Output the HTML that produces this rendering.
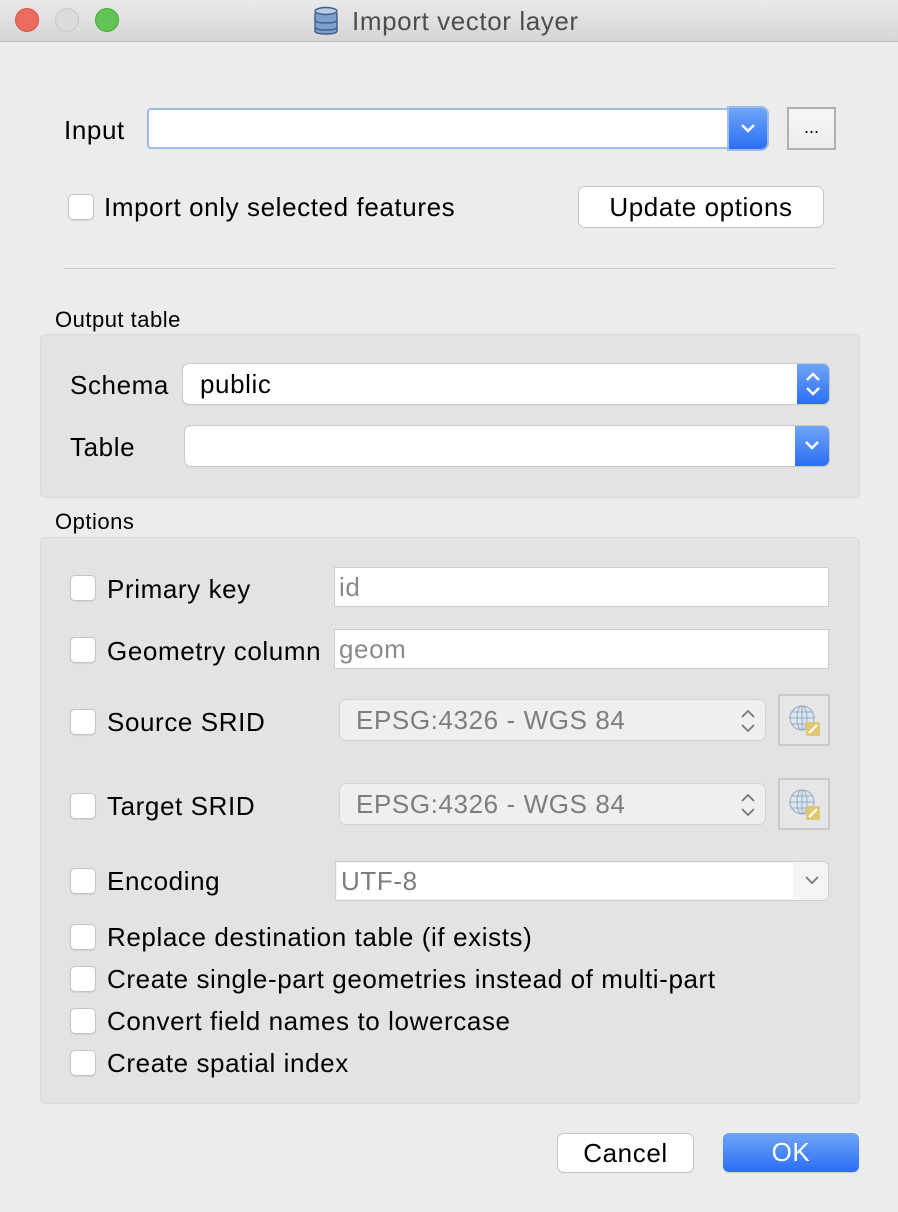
<!DOCTYPE html>
<html><head><meta charset="utf-8"><style>
*{box-sizing:border-box;margin:0;padding:0}
body{width:898px;height:1212px;background:#ececec;font-family:"Liberation Sans",sans-serif;position:relative;overflow:hidden;color:#000}
.a{position:absolute}
.t{position:absolute;font-size:26px;letter-spacing:0.6px;line-height:28px;white-space:nowrap}
.s{position:absolute;font-size:22px;letter-spacing:0.5px;line-height:24px;white-space:nowrap}
.cb{position:absolute;width:26px;height:26px;background:#fff;border:1px solid #c4c4c4;border-radius:5px;box-shadow:0 1px 1px rgba(0,0,0,.08)}
.field{position:absolute;background:#fff;border:1px solid #cdcdcd}
.combo{position:absolute;background:#fff;border-radius:6px;box-shadow:0 0 0 1px #c8c8c8,0 1px 1px rgba(0,0,0,.15)}
.blue{position:absolute;top:0;right:0;bottom:0;background:linear-gradient(#6fa5f7,#2a6ef5);border-radius:0 6px 6px 0}
.btn{position:absolute;background:#fff;border-radius:6px;box-shadow:0 0 0 1px #c6c6c6,0 1px 1px rgba(0,0,0,.15);font-size:26px;letter-spacing:0.6px;text-align:center}
.grp{position:absolute;background:#e3e3e3;border:1px solid #dadada;border-radius:6px}
.dis{position:absolute;background:#efefef;border-radius:6px;box-shadow:0 0 0 1px #d2d2d2,0 1px 1px rgba(0,0,0,.1);color:#7d7d7d;font-size:26px;letter-spacing:0.6px;line-height:40px;padding-left:16px}
.gb{position:absolute;width:52px;height:52px;border:2px solid #c9c9c9;background:#e6e6e6}
</style></head><body>
<div class="a" style="left:0;top:0;width:898px;height:42px;background:linear-gradient(#e9e9e9,#d6d6d6);border-bottom:1px solid #bdbdbd"></div>
<div class="a" style="left:15px;top:8px;width:24px;height:24px;border-radius:50%;background:#ed6a5e;border:1px solid #d55448"></div>
<div class="a" style="left:55px;top:8px;width:24px;height:24px;border-radius:50%;background:#dcdcdc;border:1px solid #c6c6c6"></div>
<div class="a" style="left:95px;top:8px;width:24px;height:24px;border-radius:50%;background:#61c454;border:1px solid #4ca93f"></div>
<svg class="a" style="left:312px;top:5px" width="28" height="30" viewBox="0 0 28 30"><g fill="#7d9fcc" stroke="#3e5d87" stroke-width="1.4"><path d="M3 22v4c0 2 5 3 11 3s11-1 11-3v-4"/><path d="M3 15v7c0 2 5 3 11 3s11-1 11-3v-7"/><path d="M3 8v7c0 2 5 3 11 3s11-1 11-3V8"/><ellipse cx="14" cy="6" rx="11" ry="3.5" fill="#b5cbe8"/></g></svg>
<div class="t" style="left:352px;top:7px;color:#4d4d4d">Import vector layer</div>

<div class="t" style="left:64px;top:116px">Input</div>
<div class="a" style="left:147px;top:108px;width:620px;height:41px;background:#fff;border:2px solid #9cbcee;border-radius:4px"></div>
<div class="a" style="left:729px;top:108px;width:38px;height:41px;background:linear-gradient(#6fa5f7,#2a6ef5);border-radius:0 6px 6px 0;box-shadow:0 0 0 2px #9cbcee"></div>
<svg class="a" style="left:737px;top:120px" width="22" height="16"><path d="M5 5l6 6 6-6" stroke="#fff" stroke-width="2.4" fill="none"/></svg>
<div class="a" style="left:787px;top:107px;width:49px;height:43px;border:2px solid #b0b0b0;background:linear-gradient(#f6f6f6,#ececec);font-size:18px;text-align:center;line-height:36px">...</div>

<div class="cb" style="left:68px;top:194px"></div>
<div class="t" style="left:104px;top:193px">Import only selected features</div>
<div class="btn" style="left:579px;top:187px;width:244px;height:40px;line-height:40px">Update options</div>
<div class="a" style="left:64px;top:268px;width:771px;height:1px;background:#cfcfcf"></div>

<div class="s" style="left:55px;top:308px">Output table</div>
<div class="grp" style="left:40px;top:334px;width:820px;height:164px"></div>
<div class="t" style="left:70px;top:371px">Schema</div>
<div class="combo" style="left:183px;top:364px;width:646px;height:40px"><span style="position:absolute;left:17px;top:5px;font-size:26px;letter-spacing:0.6px">public</span><div class="blue" style="width:32px"></div></div>
<svg class="a" style="left:801px;top:368px" width="24" height="32"><path d="M6 12l6-6 6 6M6 20l6 6 6-6" stroke="#fff" stroke-width="2.4" fill="none"/></svg>
<div class="t" style="left:70px;top:433px">Table</div>
<div class="combo" style="left:185px;top:426px;width:644px;height:40px"><div class="blue" style="width:34px"></div></div>
<svg class="a" style="left:800px;top:438px" width="24" height="16"><path d="M6 4l6 6 6-6" stroke="#fff" stroke-width="2.4" fill="none"/></svg>

<div class="s" style="left:55px;top:510px">Options</div>
<div class="grp" style="left:40px;top:537px;width:820px;height:567px"></div>

<div class="cb" style="left:70px;top:575px"></div>
<div class="t" style="left:107px;top:575px">Primary key</div>
<div class="field" style="left:334px;top:567px;width:495px;height:40px;color:#8a8a8a;font-size:26px;letter-spacing:0.6px;line-height:38px;padding-left:4px">id</div>

<div class="cb" style="left:70px;top:637px"></div>
<div class="t" style="left:107px;top:637px">Geometry column</div>
<div class="field" style="left:334px;top:629px;width:495px;height:40px;color:#8a8a8a;font-size:26px;letter-spacing:0.6px;line-height:38px;padding-left:4px">geom</div>

<div class="cb" style="left:70px;top:709px"></div>
<div class="t" style="left:107px;top:708px">Source SRID</div>
<div class="dis" style="left:340px;top:700px;width:425px;height:40px">EPSG:4326 - WGS 84</div>
<svg class="a" style="left:737px;top:707px" width="22" height="28"><path d="M5 10l6-6 6 6M5 18l6 6 6-6" stroke="#777" stroke-width="1.8" fill="none"/></svg>
<div class="gb" style="left:778px;top:694px"></div>

<div class="cb" style="left:70px;top:793px"></div>
<div class="t" style="left:107px;top:792px">Target SRID</div>
<div class="dis" style="left:340px;top:784px;width:425px;height:40px">EPSG:4326 - WGS 84</div>
<svg class="a" style="left:737px;top:791px" width="22" height="28"><path d="M5 10l6-6 6 6M5 18l6 6 6-6" stroke="#777" stroke-width="1.8" fill="none"/></svg>
<div class="gb" style="left:778px;top:778px"></div>

<svg class="a" style="left:786px;top:702px" width="36" height="36"><g stroke="#9aa8b8" stroke-width="1" fill="none"><circle cx="16" cy="16" r="12" fill="#d8e6f6"/><ellipse cx="16" cy="16" rx="5" ry="12"/><path d="M4 16h24M6 10h20M6 22h20M16 4v24"/></g><rect x="20" y="20" width="14" height="14" rx="2" fill="#e0c870"/><path d="M23 31l8-8" stroke="#fff" stroke-width="2"/></svg>
<svg class="a" style="left:786px;top:786px" width="36" height="36"><g stroke="#9aa8b8" stroke-width="1" fill="none"><circle cx="16" cy="16" r="12" fill="#d8e6f6"/><ellipse cx="16" cy="16" rx="5" ry="12"/><path d="M4 16h24M6 10h20M6 22h20M16 4v24"/></g><rect x="20" y="20" width="14" height="14" rx="2" fill="#e0c870"/><path d="M23 31l8-8" stroke="#fff" stroke-width="2"/></svg>

<div class="cb" style="left:70px;top:868px"></div>
<div class="t" style="left:107px;top:867px">Encoding</div>
<div class="a" style="left:335px;top:861px;width:494px;height:40px;background:#f4f4f4;border:1px solid #cfcfcf;border-radius:0 6px 6px 0"></div>
<div class="a" style="left:337px;top:863px;width:456px;height:36px;background:#fff;color:#7d7d7d;font-size:26px;letter-spacing:0.6px;line-height:36px;padding-left:4px">UTF-8</div>
<svg class="a" style="left:802px;top:873px" width="20" height="14"><path d="M4 4l6 6 6-6" stroke="#777" stroke-width="1.8" fill="none"/></svg>

<div class="cb" style="left:70px;top:924px"></div>
<div class="t" style="left:107px;top:923px">Replace destination table (if exists)</div>
<div class="cb" style="left:70px;top:966px"></div>
<div class="t" style="left:107px;top:965px">Create single-part geometries instead of multi-part</div>
<div class="cb" style="left:70px;top:1008px"></div>
<div class="t" style="left:107px;top:1007px">Convert field names to lowercase</div>
<div class="cb" style="left:70px;top:1050px"></div>
<div class="t" style="left:107px;top:1049px">Create spatial index</div>

<div class="btn" style="left:558px;top:1134px;width:135px;height:38px;line-height:38px">Cancel</div>
<div class="btn" style="left:723px;top:1133px;width:136px;height:39px;line-height:39px;background:linear-gradient(#6fa5f7,#2a6ef5);color:#fff;box-shadow:0 1px 1px rgba(0,0,0,.15)">OK</div>
</body></html>
